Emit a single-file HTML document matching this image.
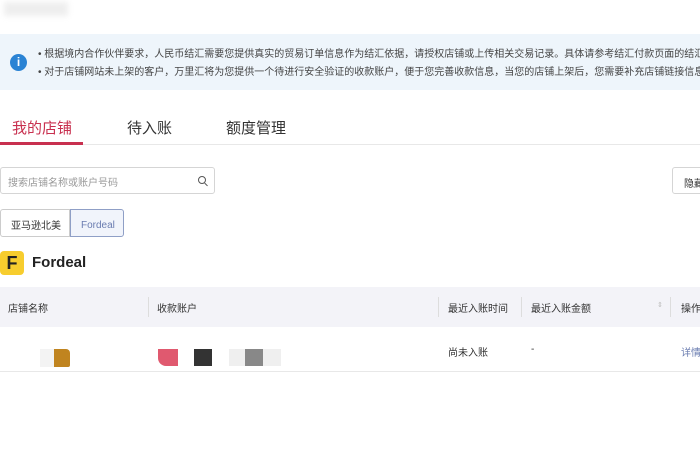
<!DOCTYPE html>
<html><head><meta charset="utf-8"><style>
body{margin:0;width:700px;height:470px;background:#fff;font-family:"Liberation Sans","Noto Sans CJK SC",sans-serif;position:relative;overflow:hidden;color:#333}
.a{position:absolute;white-space:nowrap}
</style></head><body>
<div class="a" style="left:4px;top:2px;width:64px;height:14px;background:#eee;filter:blur(3px)"></div>
<div class="a" style="left:0;top:34px;width:700px;height:56px;background:#eef5fb"></div>
<div class="a" style="left:10px;top:54px;width:17px;height:17px;border-radius:50%;background:#2a83d4;color:#fff;font-size:12px;font-weight:bold;text-align:center;line-height:17px">i</div>
<div class="a" style="left:38px;top:46px;font-size:10px;color:#444;line-height:18px">• 根据境内合作伙伴要求，人民币结汇需要您提供真实的贸易订单信息作为结汇依据，请授权店铺或上传相关交易记录。具体请参考结汇付款页面的结汇提示<br>• 对于店铺网站未上架的客户，万里汇将为您提供一个待进行安全验证的收款账户，便于您完善收款信息，当您的店铺上架后，您需要补充店铺链接信息。</div>
<div class="a" style="left:12px;top:117px;font-size:15px;color:#c8304f">我的店铺</div>
<div class="a" style="left:127px;top:117px;font-size:15px;color:#333">待入账</div>
<div class="a" style="left:226px;top:117px;font-size:15px;color:#333">额度管理</div>
<div class="a" style="left:0;top:144px;width:700px;height:1px;background:#e8e8e8"></div>
<div class="a" style="left:0;top:142px;width:83px;height:3px;background:#c8304f"></div>
<div class="a" style="left:0;top:167px;width:215px;height:27px;border:1px solid #d5d5d5;border-radius:3px;box-sizing:border-box"></div>
<div class="a" style="left:8px;top:174px;font-size:10px;color:#999">搜索店铺名称或账户号码</div>
<div class="a" style="left:198px;top:176px;width:6px;height:6px;border:1.3px solid #555;border-radius:50%"></div>
<div class="a" style="left:204px;top:184px;width:4px;height:1.3px;background:#555;transform:rotate(45deg)"></div>
<div class="a" style="left:672px;top:167px;width:40px;height:27px;border:1px solid #d5d5d5;border-radius:3px;box-sizing:border-box;font-size:10px;padding:7px 0 0 11px">隐藏</div>
<div class="a" style="left:0;top:209px;width:70px;height:28px;border:1px solid #ccc;border-radius:3px 0 0 3px;box-sizing:border-box;font-size:10px;padding:7px 0 0 10px">亚马逊北美</div>
<div class="a" style="left:70px;top:209px;width:54px;height:28px;border:1px solid #8f9fc6;border-radius:0 3px 3px 0;background:#f1f4fb;box-sizing:border-box;font-size:10px;padding:10px 0 0 10px;color:#6a7cb0">Fordeal</div>
<div class="a" style="left:0;top:251px;width:24px;height:24px;border-radius:4px;background:#f7cd2e;font-size:18px;font-weight:bold;color:#222;line-height:24px;text-align:center">F</div>
<div class="a" style="left:32px;top:254px;font-size:15px;font-weight:bold;color:#222">Fordeal</div>
<div class="a" style="left:0;top:287px;width:700px;height:40px;background:#f3f3f8"></div>
<div class="a" style="left:148px;top:297px;width:1px;height:20px;background:#ddd"></div>
<div class="a" style="left:438px;top:297px;width:1px;height:20px;background:#ddd"></div>
<div class="a" style="left:521px;top:297px;width:1px;height:20px;background:#ddd"></div>
<div class="a" style="left:670px;top:297px;width:1px;height:20px;background:#ddd"></div>
<div class="a" style="left:8px;top:300px;font-size:10px">店铺名称</div>
<div class="a" style="left:157px;top:300px;font-size:10px">收款账户</div>
<div class="a" style="left:448px;top:300px;font-size:10px">最近入账时间</div>
<div class="a" style="left:531px;top:300px;font-size:10px">最近入账金额</div>
<div class="a" style="left:657px;top:301px;font-size:7px;color:#bbb">⇕</div>
<div class="a" style="left:681px;top:300px;font-size:10px">操作</div>
<div class="a" style="left:40px;top:349px;width:22px;height:18px;background:#f3f3f3"></div>
<div class="a" style="left:54px;top:349px;width:16px;height:18px;background:#c0841f;border-radius:0 4px 2px 0"></div>
<div class="a" style="left:158px;top:349px;width:20px;height:17px;background:#e0596f;border-radius:0 0 0 8px"></div>
<div class="a" style="left:194px;top:349px;width:18px;height:17px;background:#333"></div>
<div class="a" style="left:229px;top:349px;width:52px;height:17px;background:#efefef"></div>
<div class="a" style="left:245px;top:349px;width:18px;height:17px;background:#888"></div>
<div class="a" style="left:448px;top:344px;font-size:10px">尚未入账</div>
<div class="a" style="left:531px;top:344px;font-size:10px">-</div>
<div class="a" style="left:681px;top:344px;font-size:10px;color:#6a7cb0">详情</div>
<div class="a" style="left:0;top:371px;width:700px;height:1px;background:#e8e8e8"></div>
</body></html>
